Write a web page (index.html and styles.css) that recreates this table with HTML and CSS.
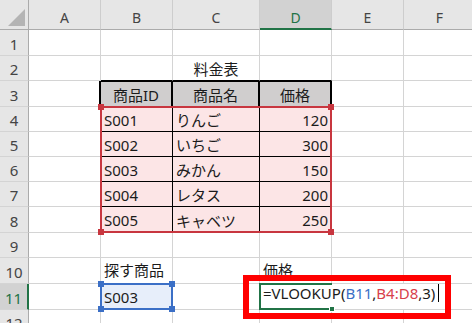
FILE: index.html
```html
<!DOCTYPE html>
<html lang="ja">
<head>
<meta charset="utf-8">
<title>料金表</title>
<link rel="stylesheet" href="styles.css">
</head>
<body>
<div class="sheet">
  <div class="grid">
    <!-- column headers -->
    <div class="corner"></div>
    <div class="colhead">A</div>
    <div class="colhead">B</div>
    <div class="colhead">C</div>
    <div class="colhead is-active">D</div>
    <div class="colhead">E</div>
    <div class="colhead">F</div>

    <!-- 1 -->
    <div class="rowhead">1</div>
    <div class="cell"></div><div class="cell"></div><div class="cell"></div>
    <div class="cell"></div><div class="cell"></div><div class="cell"></div>

    <!-- 2 -->
    <div class="rowhead">2</div>
    <div class="cell"></div>
    <div class="cell tbl-top"></div>
    <div class="cell tbl-top center">料金表</div>
    <div class="cell tbl-top"></div>
    <div class="cell"></div><div class="cell"></div>

    <!-- 3 -->
    <div class="rowhead">3</div>
    <div class="cell tbl-left"></div>
    <div class="cell th center">商品ID</div>
    <div class="cell th center">商品名</div>
    <div class="cell th center">価格</div>
    <div class="cell"></div><div class="cell"></div>

    <!-- 4 -->
    <div class="rowhead">4</div>
    <div class="cell"></div>
    <div class="cell td">S001</div>
    <div class="cell td">りんご</div>
    <div class="cell td num">120</div>
    <div class="cell"></div><div class="cell"></div>

    <!-- 5 -->
    <div class="rowhead">5</div>
    <div class="cell"></div>
    <div class="cell td">S002</div>
    <div class="cell td">いちご</div>
    <div class="cell td num">300</div>
    <div class="cell"></div><div class="cell"></div>

    <!-- 6 -->
    <div class="rowhead">6</div>
    <div class="cell"></div>
    <div class="cell td">S003</div>
    <div class="cell td">みかん</div>
    <div class="cell td num">150</div>
    <div class="cell"></div><div class="cell"></div>

    <!-- 7 -->
    <div class="rowhead">7</div>
    <div class="cell"></div>
    <div class="cell td">S004</div>
    <div class="cell td">レタス</div>
    <div class="cell td num">200</div>
    <div class="cell"></div><div class="cell"></div>

    <!-- 8 -->
    <div class="rowhead">8</div>
    <div class="cell"></div>
    <div class="cell td last">S005</div>
    <div class="cell td last">キャベツ</div>
    <div class="cell td last num">250</div>
    <div class="cell"></div><div class="cell"></div>

    <!-- 9 -->
    <div class="rowhead">9</div>
    <div class="cell"></div><div class="cell"></div><div class="cell"></div>
    <div class="cell"></div><div class="cell"></div><div class="cell"></div>

    <!-- 10 -->
    <div class="rowhead">10</div>
    <div class="cell"></div>
    <div class="cell label">探す商品</div>
    <div class="cell"></div>
    <div class="cell label">価格</div>
    <div class="cell"></div><div class="cell"></div>

    <!-- 11 -->
    <div class="rowhead is-active">11</div>
    <div class="cell"></div>
    <div class="cell key">S003</div>
    <div class="cell"></div>
    <div class="cell formula">=VLOOKUP(<span class="ref-blue">B11</span>,<span class="ref-red">B4:D8</span>,3)<span class="caret"></span></div>

    <!-- 12 -->
    <div class="rowhead">12</div>
    <div class="cell"></div><div class="cell"></div><div class="cell"></div>
    <div class="cell"></div><div class="cell"></div><div class="cell"></div>
  </div>

  <!-- selection and reference highlights drawn over the cells -->
  <div class="grid overlay">
    <div class="range range-red">
      <span class="handle tl"></span><span class="handle tr"></span>
      <span class="handle bl"></span><span class="handle br"></span>
    </div>
    <div class="range range-blue">
      <span class="handle tl"></span><span class="handle tr"></span>
      <span class="handle bl"></span><span class="handle br"></span>
    </div>
    <div class="active-cell"><span class="fill-handle"></span></div>
  </div>

  <div class="callout"></div>
</div>
</body>
</html>
```

FILE: styles.css
```css
* {
  box-sizing: border-box;
}

html,
body {
  margin: 0;
  padding: 0;
  background: #fff;
}

body {
  width: 472px;
  height: 323px;
  overflow: hidden;
  font-family: "Noto Sans", "Noto Sans CJK JP", sans-serif;
  font-size: 15px;
  color: #1b1b1b;
}

.sheet {
  position: relative;
  width: 472px;
  height: 323px;
  overflow: hidden;
}

.grid {
  display: grid;
  grid-template-columns: 29px 72px 72px 87px 72px 72px 72px;
  grid-template-rows: 30px 26px 25px 26px 25px 25px 25px 25px 26px 25px 26px 26px 25px;
}

/* headers */
.corner {
  position: relative;
  background: #e6e6e6;
  border-right: 1px solid #ababab;
  border-bottom: 1px solid #ababab;
}

.corner::after {
  content: "";
  position: absolute;
  right: 3px;
  bottom: 3px;
  width: 17px;
  height: 17px;
  background: #b4b4b4;
  clip-path: polygon(100% 0, 100% 100%, 0 100%);
}

.colhead {
  display: flex;
  align-items: center;
  justify-content: center;
  padding-top: 6px;
  background: #e6e6e6;
  border-right: 1px solid #cdcdcd;
  border-bottom: 1px solid #ababab;
  font-size: 14px;
  color: #444;
}

.colhead.is-active {
  background: #d2d2d2;
  border-bottom: 2px solid #217346;
  color: #217346;
}

.rowhead {
  display: flex;
  align-items: center;
  justify-content: center;
  padding-top: 2px;
  background: #e6e6e6;
  border-right: 1px solid #ababab;
  border-bottom: 1px solid #d4d4d4;
  color: #444;
}

.rowhead.is-active {
  background: #d2d2d2;
  border-right: 2px solid #217346;
  color: #217346;
}

/* cells */
.cell {
  display: flex;
  align-items: center;
  padding: 1px 3px 0;
  border-right: 1px solid #d4d4d4;
  border-bottom: 1px solid #d4d4d4;
  white-space: nowrap;
}

.center {
  justify-content: center;
}

.num {
  justify-content: flex-end;
}

.label {
  padding: 0 3px 3px;
}

.tbl-top {
  border-bottom-color: #000;
}

.tbl-left {
  border-right: 2px solid #000;
}

.th {
  background: #d0cece;
  border-right: 2px solid #000;
  border-bottom-color: #000;
  box-shadow: inset 0 1px 0 #000;
}

.td {
  background: #fce5e6;
  border-right-color: #000;
  border-bottom-color: #000;
}

.td.last {
  border-bottom-color: #d4d4d4;
}

.key {
  background: #e7eefa;
}

/* cell being edited: text runs on over E and F */
.formula {
  grid-column: span 3;
  padding: 0 3px 7px;
  border-right: none;
  background: #fff;
  color: #1b1b1b;
}

.ref-blue {
  color: #3b6fc6;
}

.ref-red {
  color: #d8404b;
}

.caret {
  display: inline-block;
  width: 1px;
  height: 18px;
  margin-left: 3px;
  vertical-align: -4px;
  background: #000;
}

/* highlight layer */
.overlay {
  position: absolute;
  inset: 0;
  pointer-events: none;
}

.range {
  position: relative;
  margin: -1px 0 0 -1px;
  border: 2px solid;
}

.range-red {
  grid-column: 3 / 6;
  grid-row: 5 / 10;
  border-color: #c8363f;
  color: #c8363f;
}

.range-blue {
  grid-column: 3 / 4;
  grid-row: 12 / 13;
  border-color: #3b6fc6;
  color: #3b6fc6;
}

.handle {
  position: absolute;
  width: 6px;
  height: 6px;
  background: currentColor;
}

.handle.tl { left: -4px; top: -4px; }
.handle.tr { right: -4px; top: -4px; }
.handle.bl { left: -4px; bottom: -4px; }
.handle.br { right: -4px; bottom: -4px; }

.active-cell {
  position: relative;
  grid-column: 5 / 6;
  grid-row: 12 / 13;
  margin: -1px 0 0 -1px;
  border: 2px solid #217346;
  border-right: none;
}

.fill-handle {
  position: absolute;
  right: -3px;
  bottom: -4px;
  width: 6px;
  height: 6px;
  background: #217346;
  border: 1px solid #fff;
}

/* red callout frame around the formula */
.callout {
  position: absolute;
  left: 243px;
  top: 275px;
  width: 208px;
  height: 44px;
  border: 6px solid #ff0000;
}
```
